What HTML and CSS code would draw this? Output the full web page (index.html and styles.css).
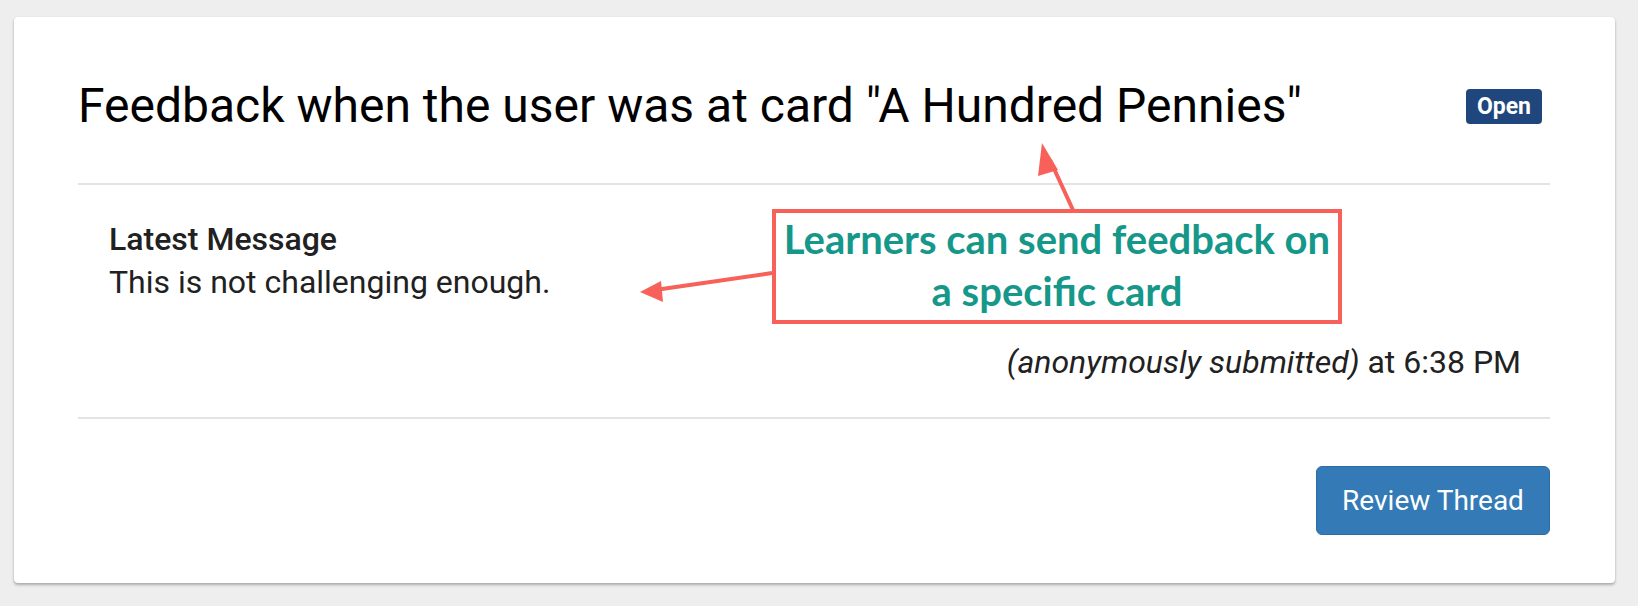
FILE: index.html
```html
<!DOCTYPE html>
<html lang="en">
<head>
<meta charset="utf-8">
<title>Feedback</title>
<link rel="stylesheet" href="styles.css">
</head>
<body>
<div class="page">
  <div class="card">
    <div class="card-header">
      <h1 class="title">Feedback when the user was at card "A Hundred Pennies"</h1>
      <span class="badge">Open</span>
    </div>
    <div class="card-body">
      <div class="label">Latest Message</div>
      <div class="message">This is not challenging enough.</div>
      <div class="meta"><em>(anonymously submitted)</em> at 6:38 PM</div>
    </div>
    <div class="card-footer">
      <button class="btn">Review Thread</button>
    </div>
  </div>

  <svg class="arrows" width="1638" height="606" viewBox="0 0 1638 606" aria-hidden="true">
    <line x1="1073" y1="210" x2="1050" y2="160" stroke="#f7615a" stroke-width="4"/>
    <polygon points="1042,143 1058,170 1038,176" fill="#f7615a"/>
    <line x1="772" y1="273" x2="655" y2="290" stroke="#f7615a" stroke-width="4"/>
    <polygon points="640,292 661,281 663,302" fill="#f7615a"/>
  </svg>
  <div class="callout">Learners can send feedback on<br>a specific card</div>
</div>
</body>
</html>
```

FILE: styles.css
```css
* { box-sizing: border-box; }

html, body {
  margin: 0;
  padding: 0;
  background: #eeeeee;
  font-family: Roboto, "Liberation Sans", sans-serif;
}

.page {
  position: relative;
  width: 1638px;
  height: 606px;
  padding: 17px 23px 0 14px;
}

.card {
  background: #ffffff;
  border-radius: 4px;
  box-shadow: 0 2px 3px rgba(0, 0, 0, 0.28), 0 0 1px rgba(0, 0, 0, 0.12);
  height: 566px;
  padding: 0 65px 0 64px;
  display: flex;
  flex-direction: column;
}

.card-header {
  display: flex;
  align-items: center;
  justify-content: space-between;
  padding: 60px 8px 48px 0;
  border-bottom: 2px solid #e4e4e4;
}

.title {
  margin: 0;
  font-size: 48px;
  line-height: 58px;
  font-weight: 400;
  color: #000000;
}

.badge {
  background: #1f477d;
  color: #ffffff;
  font-weight: 700;
  font-size: 23px;
  line-height: 35px;
  height: 35px;
  padding: 0 11px;
  border-radius: 4px;
}

.card-body {
  padding: 33px 29px 33px 31px;
  border-bottom: 2px solid #e1e4e7;
  color: #212121;
  font-size: 32px;
  line-height: 43px;
}

.label {
  font-weight: 500;
}

.meta {
  margin-top: 37px;
  text-align: right;
}

.card-footer {
  display: flex;
  justify-content: flex-end;
  padding-top: 47px;
}

.btn {
  font-family: Roboto, "Liberation Sans", sans-serif;
  font-size: 28px;
  color: #ffffff;
  background: #337ab7;
  border: 1px solid #2e6da4;
  border-radius: 6px;
  width: 234px;
  height: 69px;
  padding: 0;
}

.arrows {
  position: absolute;
  left: 0;
  top: 0;
  pointer-events: none;
}

.callout {
  position: absolute;
  left: 772px;
  top: 209px;
  width: 570px;
  height: 115px;
  border: 4px solid #f7615a;
  background: #ffffff;
  color: #15978a;
  font-family: Lato, "Open Sans", sans-serif;
  font-weight: 700;
  font-size: 40px;
  line-height: 52px;
  text-align: center;
  padding-top: 0;
}
```
